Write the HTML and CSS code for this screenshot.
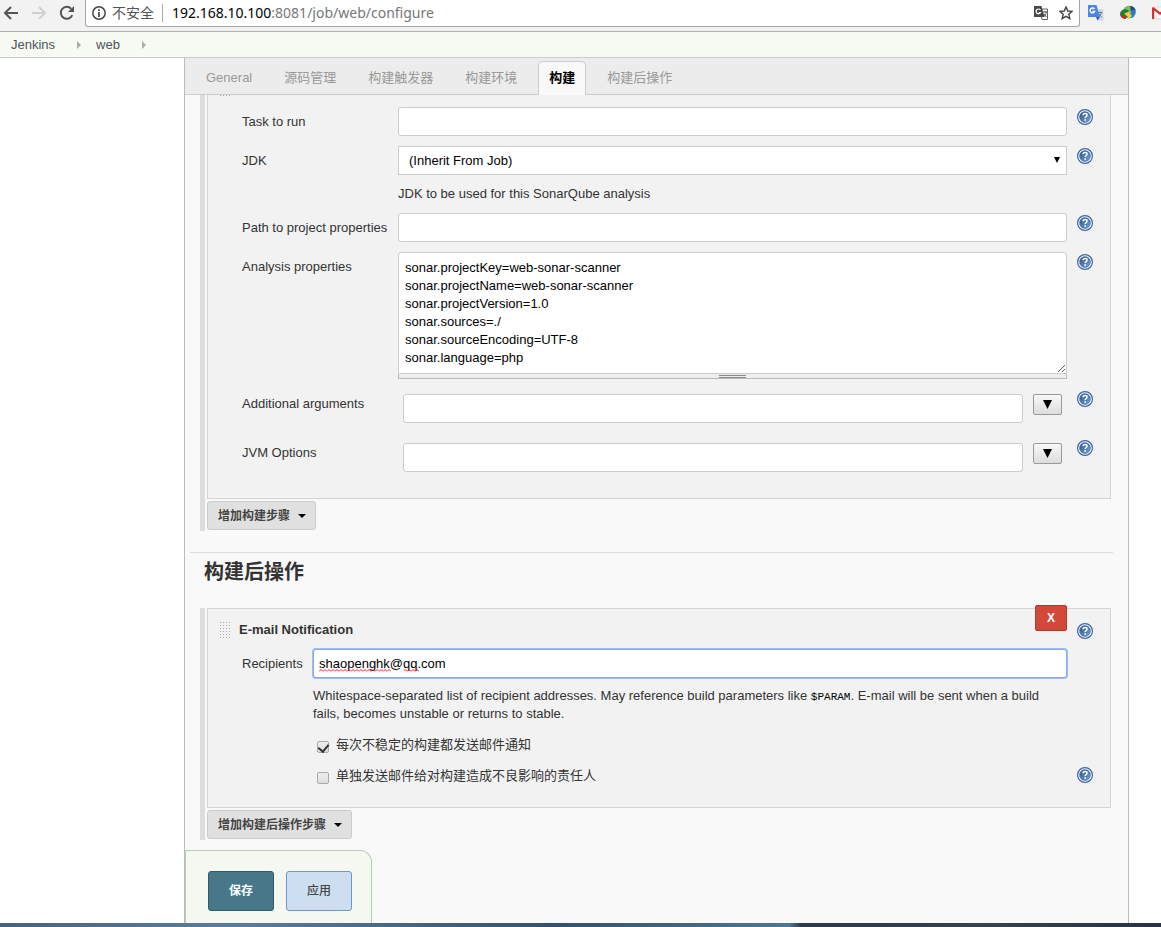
FILE: index.html
```html
<!DOCTYPE html>
<html lang="zh-CN">
<head>
<meta charset="utf-8">
<title>web Config [Jenkins]</title>
<link rel="stylesheet" href="styles.css">
</head>
<body>
<svg class="defs" aria-hidden="true">
  <defs>
    <linearGradient id="ball" x1="0" y1="0" x2="1" y2="1">
      <stop offset="0" stop-color="#2a4f8f"/>
      <stop offset="1" stop-color="#7ba6d2"/>
    </linearGradient>
    <symbol id="help" viewBox="0 0 16 16">
      <circle cx="8" cy="8" r="7.4" fill="#fff" stroke="#3a62a0" stroke-width="1.2"/>
      <circle cx="8" cy="8" r="5.500" fill="url(#ball)" stroke="#3a62a0" stroke-width=".5"/>
      <path d="M6 6.300C6 5 6.900 4.400 8.100 4.400s2 .7 2 1.700c0 1.400-1.900 1.400-1.900 2.900" fill="none" stroke="#fff" stroke-width="1.500"/>
      <rect x="7.400" y="10.200" width="1.600" height="1.600" fill="#fff"/>
    </symbol>
    <pattern id="dots" width="3" height="3" patternUnits="userSpaceOnUse">
      <rect width="1" height="1" fill="#a8a8a8"/>
    </pattern>
  </defs>
</svg>

<header class="browser">
  <button class="nav" aria-label="Back"><svg width="16" height="16" viewBox="0 0 16 16"><path d="M15 8H2.500M8 2L2 8l6 6" fill="none" stroke="#555" stroke-width="2"/></svg></button>
  <button class="nav" aria-label="Forward" disabled><svg width="16" height="16" viewBox="0 0 16 16"><path d="M1 8h12.500M8 2l6 6-6 6" fill="none" stroke="#d0d0d0" stroke-width="2"/></svg></button>
  <button class="nav" aria-label="Reload"><svg width="16" height="16" viewBox="0 0 16 16"><path d="M13.300 10.200A6 6 0 1 1 12.300 3.800" fill="none" stroke="#555" stroke-width="2"/><path d="M15 1v6H9z" fill="#555"/></svg></button>
  <div class="omnibox">
    <svg width="14" height="14" viewBox="0 0 14 14"><circle cx="7" cy="7" r="6.200" fill="none" stroke="#444" stroke-width="1.500"/><path d="M7 6v5M7 3.200v1.700" stroke="#444" stroke-width="1.700"/></svg>
    <span class="insecure">不安全</span>
    <span class="url"><b>192.168.10.100</b>:8081/job/web/configure</span>
    <button class="mini" aria-label="Translate"><svg width="14" height="14" viewBox="0 0 14 14"><path d="M5 3h8.500v10.500H8z" fill="#fff" stroke="#666"/><path d="M0 0h7.500l3 11H0z" fill="#484848"/><path d="M6.400 4A2.400 2.400 0 1 0 6.600 6.500H4.600" fill="none" stroke="#fff" stroke-width="1.200"/><path d="M9 6h4M11 5v1M12.300 6c-.5 2-1.300 3.500-2.300 4.500M10 8l2.500 3" fill="none" stroke="#555"/></svg></button>
    <button class="mini" aria-label="Bookmark"><svg width="14" height="14" viewBox="0 0 14 14"><path d="M7 1l1.800 4 4.300.4-3.300 2.900 1 4.300L7 10.300l-3.800 2.300 1-4.300L.9 5.400 5.200 5z" fill="none" stroke="#444" stroke-width="1.400"/></svg></button>
  </div>
  <div class="extensions">
    <button class="mini" aria-label="Google Translate"><svg width="16" height="16" viewBox="0 0 16 16"><path d="M7 4h8.500v11.500H9z" fill="#d5d9dd"/><path d="M0 0h8.500l3.500 12H0z" fill="#4a86e8"/><path d="M6.400 4A2.400 2.400 0 1 0 6.600 6.500H4.400" fill="none" stroke="#fff" stroke-width="1.300"/><path d="M9.500 7.500h5M12 6.500v1M13.500 7.500c-.5 2-1.500 3.500-3 4.500M11 9l3 3.500" fill="none" stroke="#667e99"/><path d="M8 12h4l-2.500 3.500z" fill="#2c5ab5"/></svg></button>
    <button class="mini" aria-label="Download manager"><svg width="16" height="16" viewBox="0 0 16 16"><circle cx="9.500" cy="7" r="6.300" fill="#2f7fc0"/><path d="M9 1c3-.6 6 1.500 6.500 4-1 1-3-.5-5 1z" fill="#1c4f86"/><path d="M4 4c1-2.500 4-3.500 6-3 1 1-.5 2.500 1 4l-3 2z" fill="#7cc04a"/><path d="M0 8c1-3 5-5 8-3l2 4-4 4C3 13 0 11 0 8z" fill="#257a34"/><path d="M0 9c1 1.500 3 2.500 6 2v3c-3 0-6-2-6-5z" fill="#b5342a"/><path d="M4 8.500l7-2.500-1 2.500 2 2.500-4 3.500-.5-3z" fill="#f0cf3a"/></svg></button>
    <button class="mini" aria-label="Gmail"><svg width="16" height="16" viewBox="0 0 16 16"><path d="M0 2h16v12H0z" fill="#fafafa" stroke="#ddd"/><path d="M0 3.500Q0 2 1.500 2L8 7.200 14.500 2Q16 2 16 3.500V14h-2.200V5.500L8 10 2.200 5.500V14H0z" fill="#d8332a"/></svg></button>
  </div>
</header>

<nav class="breadcrumbs" aria-label="Breadcrumb">
  <a href="#">Jenkins</a><svg width="4" height="8" viewBox="0 0 4 8"><path d="M0 0l4 4-4 4z" fill="#aaa"/></svg>
  <a href="#">web</a><svg width="4" height="8" viewBox="0 0 4 8"><path d="M0 0l4 4-4 4z" fill="#aaa"/></svg>
</nav>

<main class="config">
  <nav class="tabs" aria-label="Sections">
    <a href="#">General</a>
    <a href="#">源码管理</a>
    <a href="#">构建触发器</a>
    <a href="#">构建环境</a>
    <a href="#" class="active">构建</a>
    <a href="#">构建后操作</a>
  </nav>

  <section class="group">
    <div class="box sonar">
      <svg class="grip-end" width="11" height="2"><rect width="11" height="2" fill="url(#dots)"/></svg>
      <div class="row">
        <label for="task">Task to run</label>
        <div class="field"><input class="text" id="task" type="text"></div>
        <button class="help" aria-label="Help"><svg width="16" height="16"><use href="#help"/></svg></button>
      </div>
      <div class="row">
        <label for="jdk">JDK</label>
        <div class="field">
          <div class="select">
            <select id="jdk"><option>(Inherit From Job)</option></select>
            <svg width="6" height="6" viewBox="0 0 6 6"><path d="M0 0h6L3 6z"/></svg>
          </div>
          <p class="note">JDK to be used for this SonarQube analysis</p>
        </div>
        <button class="help" aria-label="Help"><svg width="16" height="16"><use href="#help"/></svg></button>
      </div>
      <div class="row">
        <label for="path">Path to project properties</label>
        <div class="field"><input class="text" id="path" type="text"></div>
        <button class="help" aria-label="Help"><svg width="16" height="16"><use href="#help"/></svg></button>
      </div>
      <div class="row">
        <label for="analysis">Analysis properties</label>
        <div class="field joined">
          <textarea id="analysis" rows="6" spellcheck="false">sonar.projectKey=web-sonar-scanner
sonar.projectName=web-sonar-scanner
sonar.projectVersion=1.0
sonar.sources=./
sonar.sourceEncoding=UTF-8
sonar.language=php</textarea>
          <div class="handle"><span></span></div>
        </div>
        <button class="help" aria-label="Help"><svg width="16" height="16"><use href="#help"/></svg></button>
      </div>
      <div class="row">
        <label for="args">Additional arguments</label>
        <div class="expandable"><input class="text" id="args" type="text"><button class="expand" aria-label="Expand"><svg width="9" height="9" viewBox="0 0 9 9"><path d="M0 0h9L4.500 9z"/></svg></button></div>
        <button class="help" aria-label="Help"><svg width="16" height="16"><use href="#help"/></svg></button>
      </div>
      <div class="row">
        <label for="jvm">JVM Options</label>
        <div class="expandable"><input class="text" id="jvm" type="text"><button class="expand" aria-label="Expand"><svg width="9" height="9" viewBox="0 0 9 9"><path d="M0 0h9L4.500 9z"/></svg></button></div>
        <button class="help" aria-label="Help"><svg width="16" height="16"><use href="#help"/></svg></button>
      </div>
    </div>
    <button class="add">增加构建步骤<svg width="8" height="4" viewBox="0 0 8 4"><path d="M0 0h8L4 4z"/></svg></button>
  </section>

  <h2>构建后操作</h2>

  <section class="group">
    <div class="box mail">
      <button class="delete" aria-label="Delete">X</button>
      <div class="head">
        <svg width="12" height="18"><rect width="12" height="18" fill="url(#dots)"/></svg>
        <h3>E-mail Notification</h3>
        <button class="help" aria-label="Help"><svg width="16" height="16"><use href="#help"/></svg></button>
      </div>
      <div class="row">
        <label for="recipients">Recipients</label>
        <div class="field">
          <div class="spelled">
            <input class="text focused" id="recipients" type="text" value="shaopenghk@qq.com" spellcheck="false">
            <svg width="110" height="3"><defs><pattern id="wave" width="4" height="3" patternUnits="userSpaceOnUse"><path d="M0 2.500L2 .5l2 2" fill="none" stroke="#e02020"/></pattern></defs><path d="M0 0h72v3H0zM85 0h15v3H85z" fill="url(#wave)"/></svg>
          </div>
          <p class="note">Whitespace-separated list of recipient addresses. May reference build parameters like <code>$PARAM</code>. E-mail will be sent when a build fails, becomes unstable or returns to stable.</p>
        </div>
      </div>
      <div class="check"><input type="checkbox" id="unstable" checked><label for="unstable">每次不稳定的构建都发送邮件通知</label></div>
      <div class="check"><input type="checkbox" id="individuals"><label for="individuals">单独发送邮件给对构建造成不良影响的责任人</label><button class="help" aria-label="Help"><svg width="16" height="16"><use href="#help"/></svg></button></div>
    </div>
    <button class="add">增加构建后操作步骤<svg width="8" height="4" viewBox="0 0 8 4"><path d="M0 0h8L4 4z"/></svg></button>
  </section>

  <div class="actions">
    <button class="save">保存</button>
    <button class="apply">应用</button>
  </div>
</main>
<footer class="taskbar"></footer>
</body>
</html>
```

FILE: styles.css
```css
* { box-sizing: border-box; }

body {
  margin: 0;
  min-height: 100vh;
  display: flex;
  flex-direction: column;
  background: #fff;
  color: #333;
  font: 13px/18px "Liberation Sans", "Noto Sans CJK SC", sans-serif;
}

button, input, select, textarea { font: inherit; margin: 0; }
button { padding: 0; border: 0; background: none; }
svg { display: block; flex: none; }
a { color: inherit; text-decoration: none; }
h2, h3, p { margin: 0; }
.defs { position: absolute; width: 0; height: 0; }

/* Browser toolbar */
.browser {
  display: flex;
  align-items: flex-start;
  height: 32px;
  padding-left: 3px;
  overflow: hidden;
  background: #f2f2f2;
  border-bottom: 1px solid #b0b0b0;
}
.nav { width: 16px; margin: 5px 12px 0 0; }
.omnibox {
  flex: 1;
  display: flex;
  align-items: center;
  height: 27px;
  margin-left: -2px;
  padding: 0 6px;
  background: #fff;
  border: 1px solid #a6a6a6;
  border-top: 0;
  border-radius: 0 0 3px 3px;
}
.insecure { margin-left: 6px; padding-right: 8px; border-right: 1px solid #aaa; font-size: 14px; color: #555; }
.url { flex: 1; margin-left: 9px; font-family: "Noto Sans", sans-serif; font-size: 14px; color: #777; }
.url b { font-weight: 400; color: #000; }
.omnibox .mini + .mini { margin-left: 11px; }
.extensions { display: flex; gap: 16px; width: 81px; padding: 5px 0 0 8px; }

/* Breadcrumbs */
.breadcrumbs {
  display: flex;
  align-items: center;
  height: 26px;
  padding-left: 11px;
  background: #f6faf2;
  border-bottom: 1px solid #ccc;
  color: #4d545d;
}
.breadcrumbs svg { margin: 0 15px 0 22px; }

/* Config panel */
.config {
  flex: 1;
  display: flex;
  flex-direction: column;
  margin: 0 32px 0 184px;
  background: #f9f9f9;
  border: solid #bbb;
  border-width: 0 1px;
}
.tabs {
  display: flex;
  align-items: flex-end;
  height: 37px;
  padding-left: 5px;
  background: #ececec;
  border-bottom: 1px solid #ccc;
  color: #999;
}
.tabs a {
  height: 34px;
  margin: 0 5px -1px;
  padding: 0 10px;
  border: 1px solid transparent;
  border-bottom: 0;
  line-height: 31px;
}
.tabs .active {
  background: #f9f9f9;
  border-color: #ccc;
  border-radius: 5px 5px 0 0;
  color: #000;
  font-weight: 700;
}

.group {
  margin: 0 17px 0 15px;
  padding: 0 0 1px 2px;
  border-left: 5px solid #ddd;
}
.box {
  position: relative;
  display: flex;
  flex-direction: column;
  background: #f2f2f2;
  border: 1px solid #d4d4d4;
}
.sonar { gap: 10px; padding: 12px 17px 21px 34px; border-top: 0; }
.grip-end { position: absolute; left: 12px; top: 0; }

.row { display: grid; grid-template-columns: 156px 1fr 16px; align-items: start; }
.row > label { padding-top: 6px; }
.row > .help { padding-top: 2px; }
.field { display: flex; flex-direction: column; gap: 10px; margin-right: 10px; }
.joined { gap: 0; }
.help { width: 16px; }

.text, select, textarea {
  display: block;
  width: 100%;
  padding: 6px 6px 5px;
  background: #fff;
  border: 1px solid #ccc;
  border-radius: 3px;
  color: #000;
}
.text, select { height: 29px; }
.select, .spelled { position: relative; }
select { appearance: none; padding: 5px 10px 4px; border-radius: 0; }
.select svg { position: absolute; right: 7px; top: 11px; }
textarea { height: 122px; border-radius: 3px 3px 0 0; overflow: hidden; resize: vertical; }
.handle {
  display: flex;
  justify-content: center;
  height: 5px;
  background: #eee;
  border: 1px solid #bbb;
  border-top: 0;
}
.handle span { width: 27px; height: 3px; margin-top: 1px; border: solid #888; border-width: 1px 0; }

.expandable { display: flex; align-items: flex-start; gap: 10px; padding: 5px; margin-right: 10px; }
.expand {
  display: flex;
  flex: none;
  align-items: center;
  justify-content: center;
  width: 29px;
  height: 21px;
  background: linear-gradient(#f8f8f8, #ddd);
  border: 1px solid #999;
  border-radius: 2px;
}

.add {
  display: flex;
  align-items: center;
  gap: 8px;
  height: 29px;
  margin-top: 2px;
  padding: 0 9px 0 10px;
  background: #e0e0e0;
  border: 1px solid #ccc;
  border-radius: 3px;
  color: #444;
  font-size: 12px;
  font-weight: 700;
}

h2 {
  margin: 21px 15px 21px 5px;
  padding: 5px 0 0 14px;
  border-top: 1px solid #ddd;
  font-size: 20px;
  line-height: 29px;
}

/* E-mail notification */
.mail { padding: 12px 17px 22px 0; }
.head { display: flex; align-items: center; gap: 7px; height: 18px; margin-bottom: 10px; padding-left: 12px; }
.head h3 { flex: 1; font-size: 13px; }
.head > svg { margin-top: 2px; }
.head .help { padding-top: 2px; }
.delete {
  position: absolute;
  top: -4px;
  right: 43px;
  width: 32px;
  height: 26px;
  background: #d24939;
  border: 1px solid #b33630;
  border-radius: 2px;
  color: #fff;
  font-size: 12px;
  font-weight: 700;
}
.mail .row { grid-template-columns: 71px 1fr; padding-left: 34px; }
.mail .field { gap: 9px; margin-right: 26px; }
.focused { padding: 5px; border-color: #8aa9e8; box-shadow: 0 0 0 1px #a4bdf0; outline: 0; }
.spelled svg { position: absolute; left: 6px; top: 20px; }
code { font: 11px/11px "Liberation Mono", monospace; color: #000; }
.check { display: flex; align-items: center; height: 18px; margin-top: 13px; padding-left: 109px; }
.check label { flex: 1; margin-left: 7px; }
.check input {
  appearance: none;
  display: grid;
  width: 12px;
  height: 12px;
  margin-top: 3px;
  background: linear-gradient(#eee, #ddd);
  border: 1px solid #aaa;
  border-radius: 2px;
}
.check input:checked::before {
  content: "";
  width: 5px;
  height: 8px;
  margin: 0 auto;
  border: solid #333;
  border-width: 0 2px 2px 0;
  transform: rotate(40deg);
}
.check .help { padding-bottom: 2px; }

/* Save bar */
.actions {
  display: flex;
  flex: 1;
  align-self: flex-start;
  gap: 12px;
  margin-top: 10px;
  padding: 20px 19px 12px 22px;
  background: #f4f8f1;
  border: 1px solid #b4ccb9;
  border-bottom: 0;
  border-radius: 0 12px 0 0;
}
.actions button { width: 66px; height: 40px; border: 1px solid; border-radius: 3px; font-size: 12px; font-weight: 700; }
.actions .save { background: #46788a; border-color: #2f5a6b; color: #fff; }
.actions .apply { background: #ccdeef; border-color: #6c9ac8; color: #444; font-weight: 500; }

.taskbar { height: 4px; background: linear-gradient(90deg, #46627f 0, #5b7d9d 20%, #34506c 48%, #4e7794 68%, #2b3948 69%, #35434f 85%, #263442 100%); }
```
